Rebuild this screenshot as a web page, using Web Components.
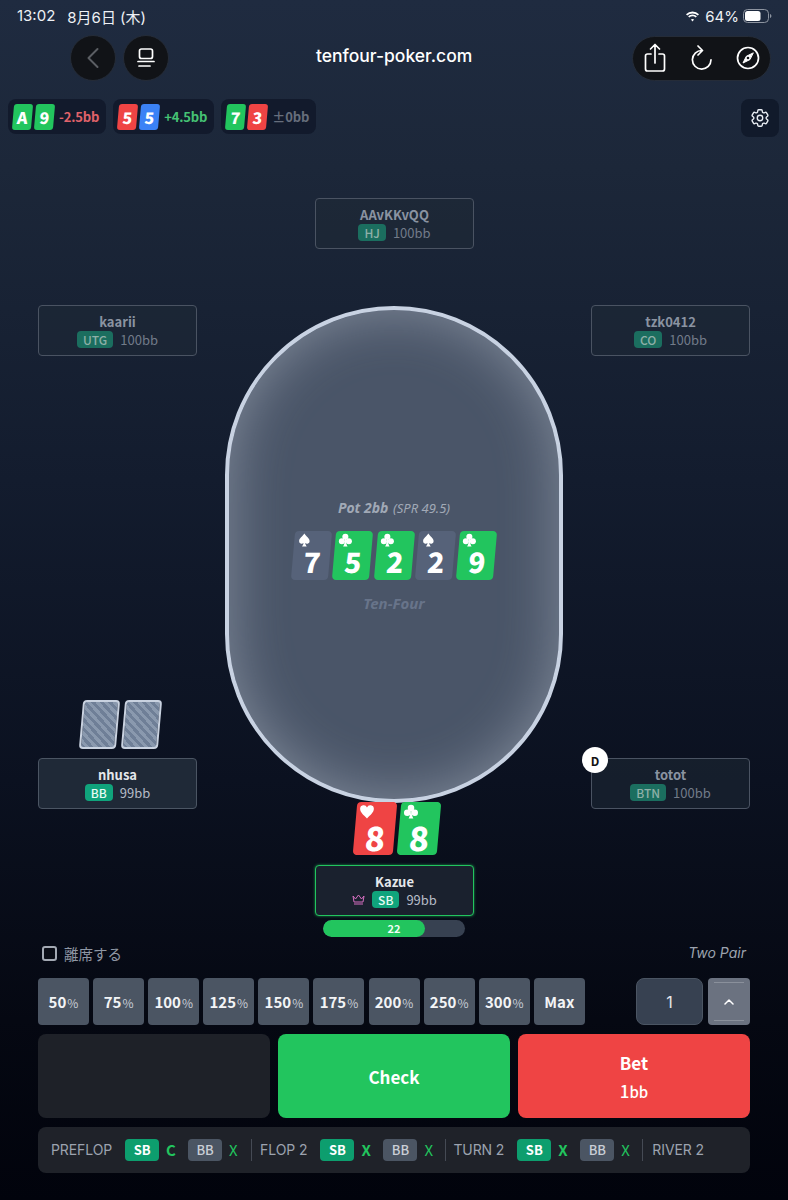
<!DOCTYPE html>
<html>

<head>
    <title>Ten-Four</title>
    <meta charset="utf-8">
    <meta name="viewport" content="width=device-width, initial-scale=1" />
    <style>
        html, body { margin: 0; padding: 0; }
        body {
            width: 788px;
            height: 1200px;
            overflow: hidden;
            background: linear-gradient(180deg, #1f2b40 0%, #1c2739 14%, #131c2e 40%, #0b1120 65%, #050812 85%, #01030c 100%);
            font-family: "Noto Sans CJK JP", "Noto Sans", sans-serif;
            color: #fff;
        }
    </style>
    <script>
        const UI = '"Noto Sans CJK JP", "Noto Sans", sans-serif';

        class Base extends HTMLElement {
            render(css, html) {
                if (this.shadowRoot) return;
                this.attachShadow({ mode: 'open' }).innerHTML = `<style>${css}</style>${html}`;
            }
            attr(name, fallback = '') { return this.hasAttribute(name) ? this.getAttribute(name) : fallback; }
        }

        const SUITS = {
            s: '<path d="M12 1C9 6 3 9 3 14a4.500 4.500 0 0 0 7.500 3.300C10.300 19.500 9.500 21 8 23h8c-1.500-2-2.300-3.500-2.500-5.700A4.500 4.500 0 0 0 21 14C21 9 15 6 12 1z"/>',
            c: '<circle cx="12" cy="6.500" r="5.200"/><circle cx="6" cy="14" r="5.200"/><circle cx="18" cy="14" r="5.200"/><path d="M11 10h2c0 6 .8 10 2.800 13H8.200C10.200 20 11 16 11 10z"/>',
            h: '<path d="M12 23C6 17 1 13 1 7.500a5.700 5.700 0 0 1 11-2 5.700 5.700 0 0 1 11 2C23 13 18 17 12 23z"/>'
        };
        const COLORS = { s: '#566279', c: '#22c55e', h: '#ef4444', d: '#3b82f6' };

        customElements.define('status-bar', class extends Base {
            connectedCallback() {
                this.render(`
                    :host { display: flex; align-items: center; justify-content: space-between; height: 34px; padding: 0 16px 2px 17px; box-sizing: border-box; font: 400 15px Inter, "Noto Sans CJK JP", sans-serif; color: #eef1f5; }
                    .left { display: flex; gap: 12px; }
                    .right { display: flex; align-items: center; gap: 5px; }
                    svg { display: block; }
                `, `
                    <div class="left"><span>13:02</span><span>8月6日 (木)</span></div>
                    <div class="right">
                        <svg width="15" height="11" viewBox="0 0 15 11" fill="#fff"><path d="M7.5 2.4c2 0 3.900.8 5.300 2.200l1.200-1.300A9.300 9.300 0 0 0 7.500.5 9.300 9.300 0 0 0 1 3.300l1.200 1.300a7.500 7.500 0 0 1 5.300-2.200z"/><path d="M7.500 5.300c1.200 0 2.300.5 3.200 1.300l1.200-1.300a6.200 6.200 0 0 0-8.800 0l1.200 1.300c.9-.8 2-1.300 3.200-1.300z"/><path d="M7.500 7.900c-.6 0-1.200.2-1.600.6l1.600 1.900 1.600-1.900c-.4-.4-1-.6-1.600-.6z"/></svg>
                        <span>64%</span>
                        <svg width="29" height="14" viewBox="0 0 29 14" style="margin-left:-1px"><rect x=".5" y=".5" width="25" height="13" rx="4" fill="none" stroke="#8d94a0"/><rect x="2" y="2" width="15.500" height="10" rx="2.500" fill="#fff"/><path d="M27 5v4c.8-.3 1.400-1 1.400-2s-.6-1.700-1.400-2z" fill="#8d94a0"/></svg>
                    </div>
                `);
            }
        });

        customElements.define('browser-bar', class extends Base {
            connectedCallback() {
                this.render(`
                    :host { display: grid; grid-template-columns: 246px auto 1fr; align-items: center; height: 45px; margin-top: 1px; padding: 0 17px 0 70px; }
                    .group { display: flex; gap: 7px; }
                    .round { width: 46px; height: 46px; box-sizing: border-box; border-radius: 50%; background: #111317; display: flex; align-items: center; justify-content: center; border: 1px solid #252c38; }
                    .title { padding-bottom: 5px; font: 500 17.500px Inter, sans-serif; color: #fff; }
                    .pill { justify-self: end; width: 139px; height: 45px; box-sizing: border-box; border-radius: 23px; background: #111317; border: 1px solid #252c38; display: flex; align-items: center; justify-content: space-between; padding: 0 10px 0 11px; }
                    svg { display: block; fill: none; stroke: #fff; stroke-width: 1.700; stroke-linecap: round; stroke-linejoin: round; }
                `, `
                    <div class="group">
                        <div class="round"><svg width="14" height="22" viewBox="0 0 14 22" style="stroke:#5b5e63;stroke-width:2"><path d="M11.500 2 2.500 11l9 9"/></svg></div>
                        <div class="round"><svg width="18" height="20" viewBox="0 0 18 20"><rect x="2.500" y="1" width="13" height="9.500" rx="2"/><path d="M1 13.500h16M2 18h11"/></svg></div>
                    </div>
                    <div class="title">tenfour-poker.com</div>
                    <div class="pill">
                        <svg width="22" height="30" viewBox="0 0 22 30"><path d="M7 11H3.500A2 2 0 0 0 1.500 13v13a2 2 0 0 0 2 2h15a2 2 0 0 0 2-2V13a2 2 0 0 0-2-2H15M11 20V2M6.500 6 11 1.500 15.500 6"/></svg>
                        <svg width="22" height="26" viewBox="0 0 22 26"><path d="M12 5.500a9.300 9.300 0 1 0 9 9.300M8 1l4.500 4.500L8 10"/></svg>
                        <svg width="24" height="24" viewBox="0 0 24 24"><circle cx="12" cy="12" r="10.500"/><path d="M17 7l-6.700 3.300L7 17l6.700-3.300z" fill="#fff" stroke-width="1"/><circle cx="12" cy="12" r="1.300" fill="#111317" stroke="none"/></svg>
                    </div>
                `);
            }
        });

        customElements.define('mini-card', class extends Base {
            connectedCallback() {
                const suit = this.attr('suit', 's');
                this.render(`
                    :host { display: flex; align-items: center; justify-content: center; width: 19px; height: 26px; border-radius: 3px; transform: skewX(-5deg); background: ${COLORS[suit]}; font: 900 16px/20px ${UI}; color: #fff; }
                `, `<slot></slot>`);
            }
        });

        customElements.define('hand-chip', class extends Base {
            connectedCallback() {
                this.render(`
                    :host { display: flex; align-items: center; height: 35px; box-sizing: border-box; padding: 0 7px 0 5px; border-radius: 8px; background: #121a2c; gap: 3px; }
                    .delta { margin-left: 2px; letter-spacing: -.15px; font: 700 13px/20px ${UI}; color: ${this.attr('color', '#fff')}; }
                `, `<slot></slot><span class="delta">${this.attr('delta')}</span>`);
            }
        });

        customElements.define('hand-row', class extends Base {
            connectedCallback() {
                this.render(`
                    :host { display: flex; align-items: flex-start; gap: 7px; height: 38px; margin-top: 19px; padding: 0 9px 0 8px; }
                    .gear { margin-left: auto; width: 38px; height: 38px; border-radius: 8px; background: #111a2b; display: flex; align-items: center; justify-content: center; }
                    svg { display: block; fill: none; stroke: #e9edf3; stroke-width: 1.500; stroke-linejoin: round; }
                `, `<slot></slot><div class="gear"><svg width="22" height="22" viewBox="0 0 24 24"><path d="M9.594 3.940c.09-.542.56-.94 1.110-.94h2.593c.55 0 1.020.398 1.110.94l.213 1.281c.063.374.313.686.645.87.074.04.147.083.22.127.325.196.72.257 1.075.124l1.217-.456a1.125 1.125 0 0 1 1.370.49l1.296 2.247a1.125 1.125 0 0 1-.26 1.431l-1.003.827c-.293.241-.438.613-.43.992a7.723 7.723 0 0 1 0 .255c-.008.378.137.75.43.991l1.004.827c.424.35.534.955.26 1.430l-1.298 2.247a1.125 1.125 0 0 1-1.369.491l-1.217-.456c-.355-.133-.75-.072-1.076.124a6.470 6.470 0 0 1-.22.128c-.331.183-.581.495-.644.869l-.213 1.281c-.09.543-.56.94-1.110.94h-2.594c-.55 0-1.019-.398-1.110-.94l-.213-1.281c-.062-.374-.312-.686-.644-.87a6.520 6.520 0 0 1-.22-.127c-.325-.196-.72-.257-1.076-.124l-1.217.456a1.125 1.125 0 0 1-1.369-.49l-1.297-2.247a1.125 1.125 0 0 1 .26-1.431l1.004-.827c.292-.24.437-.613.43-.991a6.932 6.932 0 0 1 0-.255c.007-.38-.138-.751-.43-.992l-1.004-.827a1.125 1.125 0 0 1-.26-1.430l1.297-2.247a1.125 1.125 0 0 1 1.370-.491l1.216.456c.356.133.751.072 1.076-.124.072-.044.146-.086.22-.128.332-.183.582-.495.644-.869l.214-1.280Z"/><path d="M15 12a3 3 0 1 1-6 0 3 3 0 0 1 6 0Z"/></svg></div>`);
            }
        });

        customElements.define('play-card', class extends Base {
            connectedCallback() {
                const suit = this.attr('suit', 's');
                const big = this.hasAttribute('big');
                const size = big ? 15 : 14;
                this.render(`
                    :host { display: block; position: relative; width: ${big ? 40 : 37}px; height: ${big ? 53 : 49}px; border-radius: 4px; transform: skewX(-5deg); background: ${COLORS[suit]}; color: #fff; }
                    svg { position: absolute; left: 3px; top: 2px; fill: #fff; transform: skewX(5deg); }
                    .rank { position: absolute; left: 2px; right: 0; bottom: ${big ? 1 : 4}px; text-align: center; font: 900 ${big ? 33 : 28}px/${big ? 34 : 30}px ${UI}; }
                `, `<svg width="${size}" height="${size}" viewBox="0 0 24 24">${SUITS[suit]}</svg><span class="rank"><slot></slot></span>`);
            }
        });

        customElements.define('card-back', class extends Base {
            connectedCallback() {
                this.render(`
                    :host { display: block; width: 37px; height: 49px; box-sizing: border-box; border: 2px solid #c9d2e0; border-radius: 4px; transform: skewX(-5deg);
                        background: repeating-linear-gradient(45deg, #6f7f97 0 3px, #8a99ae 3px 6px); }
                `, ``);
            }
        });

        customElements.define('seat-box', class extends Base {
            connectedCallback() {
                const dim = this.hasAttribute('dim');
                const hero = this.hasAttribute('hero');
                this.render(`
                    :host { position: absolute; display: flex; flex-direction: column; align-items: center; justify-content: center; width: 159px; height: 51px; box-sizing: border-box; border: 1px solid ${hero ? '#22c55e' : dim ? '#4a5362' : '#4b5563'}; border-radius: 4px; background: ${dim ? 'rgba(31,41,55,.55)' : '#1f2937'}; ${hero ? 'box-shadow: 0 0 3px rgba(34,197,94,.7); background:#1a212e;' : ''} }
                    .name { font: 600 13px/18px ${UI}; color: ${dim ? '#8a93a1' : '#e5e7eb'}; }
                    .line { display: flex; align-items: center; gap: 7px; font: 400 13px/18px ${UI}; color: ${dim ? '#727b89' : '#b4bbc6'}; }
                    .pos { display: block; box-sizing: border-box; padding: 0 6px; text-align: center; height: 17px; border-radius: 4px; font: 500 12px/17px ${UI}; background: ${dim ? '#1b6e5f' : '#10a47c'}; color: ${dim ? '#8fb0a8' : '#e8fbf4'}; }
                `, `
                    <div class="name">${this.attr('name')}</div>
                    <div class="line"><slot></slot><span class="pos">${this.attr('pos')}</span><span>${this.attr('stack')}</span></div>
                `);
            }
        });

        customElements.define('poker-table', class extends Base {
            connectedCallback() {
                this.render(`
                    :host { position: absolute; left: 225px; top: 169px; width: 338px; height: 497px; box-sizing: border-box; border: 4px solid #c8d2e2; border-radius: 169px; background: #4a5568; box-shadow: inset 0 0 56px rgba(220,228,240,.38); display: flex; flex-direction: column; align-items: center; padding-top: 188px; }
                    .pot { height: 20px; font: italic 700 14px/20px "Noto Sans", sans-serif; color: #a1a9b6; }
                    .pot small { font: italic 400 13px "Noto Sans", sans-serif; margin-left: 1px; }
                    .board { display: flex; gap: 4.300px; margin-top: 13px; }
                    .brand { margin-top: 14px; font: italic 700 15px/18px "Noto Sans", sans-serif; color: #68748a; }
                `, `
                    <div class="pot">Pot 2bb <small>(SPR 49.5)</small></div>
                    <div class="board"><slot></slot></div>
                    <div class="brand">Ten-Four</div>
                `);
            }
        });

        customElements.define('table-stage', class extends Base {
            connectedCallback() {
                this.render(`:host { display: block; position: relative; height: 808px; }`, `<slot></slot>`);
            }
        });

        customElements.define('card-pair', class extends Base {
            connectedCallback() {
                this.render(`:host { position: absolute; display: flex; gap: ${this.attr('gap', '5')}px; }`, `<slot></slot>`);
            }
        });

        customElements.define('dealer-button', class extends Base {
            connectedCallback() {
                this.render(`:host { position: absolute; width: 26px; height: 26px; border-radius: 50%; background: #fff; color: #111; display: flex; align-items: center; justify-content: center; font: 700 12px ${UI}; }`, `<slot></slot>`);
            }
        });

        customElements.define('timer-bar', class extends Base {
            connectedCallback() {
                this.render(`
                    :host { position: absolute; width: 142px; height: 17px; border-radius: 9px; background: #374151; overflow: hidden; }
                    .fill { position: absolute; left: 0; top: 0; bottom: 0; width: 102px; border-radius: 9px; background: #22c55e; }
                    .txt { position: relative; display: block; text-align: center; font: 600 11px/17px ${UI}; color: #f0fdf4; }
                `, `<div class="fill"></div><span class="txt"><slot></slot></span>`);
            }
        });

        customElements.define('sit-row', class extends Base {
            connectedCallback() {
                this.render(`
                    :host { display: flex; align-items: center; justify-content: space-between; height: 20px; box-sizing: border-box; padding: 0 42px 3px; }
                    .l { display: flex; align-items: center; gap: 7px; font: 400 14.500px ${UI}; color: #8f97a4; }
                    .box { width: 11px; height: 11px; border: 2px solid #a3a9b3; border-radius: 3px; background: #0a0d16; }
                    .r { margin-top: -2px; font: italic 400 14px Inter, sans-serif; color: #9ca3af; }
                `, `<div class="l"><span class="box"></span>離席する</div><div class="r">Two Pair</div>`);
            }
        });

        customElements.define('size-btn', class extends Base {
            connectedCallback() {
                this.render(`
                    :host { display: flex; align-items: baseline; justify-content: center; width: 51px; height: 47px; box-sizing: border-box; padding-top: 14px; border-radius: 4px; background: #4b5563; font: 700 15px/20px ${UI}; color: #f3f4f6; }
                    small { font: 400 12px ${UI}; color: #c7ccd4; margin-left: 1px; }
                `, `<slot></slot>${this.hasAttribute('plain') ? '' : '<small>%</small>'}`);
            }
        });

        customElements.define('size-row', class extends Base {
            connectedCallback() {
                this.render(`
                    :host { display: flex; align-items: stretch; gap: 4.100px; height: 47px; margin-top: 13px; padding: 0 38px; }
                    .amount { margin-left: 47px; width: 67px; box-sizing: border-box; border: 1px solid #4b5563; border-radius: 8px; background: #374151; display: flex; align-items: center; justify-content: center; font: 400 16px Inter, sans-serif; color: #e5e7eb; }
                    .step { margin-left: 1px; width: 42px; border-radius: 4px; background: #6b7280; position: relative; display: flex; align-items: center; justify-content: center; }
                    .step::before, .step::after { content: ""; position: absolute; left: 6px; right: 6px; height: 1px; background: #8a909b; }
                    .step::before { top: 4px; }
                    .step::after { bottom: 4px; }
                    svg { display: block; fill: none; stroke: #fff; stroke-width: 1.500; stroke-linecap: round; stroke-linejoin: round; }
                `, `
                    <slot></slot>
                    <div class="amount">1</div>
                    <div class="step"><svg width="10" height="6" viewBox="0 0 10 6"><path d="M1 5l4-4 4 4"/></svg></div>
                `);
            }
        });

        customElements.define('action-btn', class extends Base {
            connectedCallback() {
                this.render(`
                    :host { flex: 1; display: flex; flex-direction: column; align-items: center; justify-content: center; box-sizing: border-box; padding-top: 2px; border-radius: 8px; background: ${this.attr('color', '#1e2128')}; font: 700 17px/28px ${UI}; color: #fff; }
                    .sub { font: 500 17px/28px ${UI}; }
                    .sub small { font-size: 15px; font-weight: 500; }
                `, `<slot></slot>${this.hasAttribute('sub') ? `<span class="sub">${this.attr('sub')}<small>bb</small></span>` : ''}`);
            }
        });

        customElements.define('action-row', class extends Base {
            connectedCallback() {
                this.render(`:host { display: flex; gap: 8px; height: 84px; margin-top: 9px; padding: 0 38px; }`, `<slot></slot>`);
            }
        });

        customElements.define('street-log', class extends Base {
            connectedCallback() {
                this.render(`
                    :host { display: flex; align-items: center; height: 46px; margin: 9px 38px 0; box-sizing: border-box; padding: 0 13px 1px; border-radius: 8px; background: #1f2229; font: 400 14px Inter, sans-serif; letter-spacing: -.1px; color: #9ca3af; white-space: nowrap; }
                `, `<slot></slot>`);
            }
        });

        customElements.define('street-act', class extends Base {
            connectedCallback() {
                const on = this.hasAttribute('on');
                this.render(`
                    :host { display: flex; align-items: center; margin-left: 13px; letter-spacing: 0; }
                    .b { width: 34px; height: 22px; border-radius: 4px; display: flex; align-items: center; justify-content: center; background: ${on ? '#0d9e6e' : '#4b5563'}; color: ${on ? '#fff' : '#c9ced6'}; font: ${on ? 700 : 500} 13px ${UI}; }
                    .a { width: 9px; margin-left: 7px; color: #22c55e; font: ${on ? 700 : 400} 15px ${UI}; }
                `, `<span class="b">${this.attr('pos')}</span><span class="a">${this.attr('act')}</span>`);
            }
        });

        customElements.define('street-sep', class extends Base {
            connectedCallback() {
                this.render(`:host { display: block; width: 1px; height: 22px; margin: 0 8px 0 12px; background: #454a54; }`, ``);
            }
        });
    </script>
</head>

<body>
    <status-bar></status-bar>
    <browser-bar></browser-bar>

    <hand-row>
        <hand-chip delta="-2.5bb" color="#e0626a"><mini-card suit="c">A</mini-card><mini-card suit="c">9</mini-card></hand-chip>
        <hand-chip delta="+4.5bb" color="#45c274"><mini-card suit="h">5</mini-card><mini-card suit="d">5</mini-card></hand-chip>
        <hand-chip delta="±0bb" color="#666e7c"><mini-card suit="c">7</mini-card><mini-card suit="h">3</mini-card></hand-chip>
    </hand-row>

    <table-stage>
        <seat-box dim name="AAvKKvQQ" pos="HJ" stack="100bb" style="left:315px;top:61px"></seat-box>
        <seat-box dim name="kaarii" pos="UTG" stack="100bb" style="left:38px;top:168px"></seat-box>
        <seat-box dim name="tzk0412" pos="CO" stack="100bb" style="left:591px;top:168px"></seat-box>

        <poker-table>
            <play-card suit="s">7</play-card>
            <play-card suit="c">5</play-card>
            <play-card suit="c">2</play-card>
            <play-card suit="s">2</play-card>
            <play-card suit="c">9</play-card>
        </poker-table>

        <card-pair style="left:81px;top:563px"><card-back></card-back><card-back></card-back></card-pair>
        <seat-box name="nhusa" pos="BB" stack="99bb" style="left:38px;top:621px"></seat-box>

        <seat-box dim name="totot" pos="BTN" stack="100bb" style="left:591px;top:621px"></seat-box>
        <dealer-button style="left:582px;top:610px">D</dealer-button>

        <card-pair gap="4" style="left:355px;top:665px"><play-card big suit="h">8</play-card><play-card big suit="c">8</play-card></card-pair>
        <seat-box hero name="Kazue" pos="SB" stack="99bb" style="left:315px;top:728px">
            <svg width="13" height="11" viewBox="0 0 13 11" fill="none" stroke="#d56fc0" stroke-width="1" stroke-linejoin="round"><path d="M1 2l2.500 3L6.500 1l3 4L12 2l-1 6H2zM2 10h9"/></svg>
        </seat-box>
        <timer-bar style="left:323px;top:783px">22</timer-bar>
    </table-stage>

    <sit-row></sit-row>

    <size-row>
        <size-btn>50</size-btn><size-btn>75</size-btn><size-btn>100</size-btn><size-btn>125</size-btn><size-btn>150</size-btn><size-btn>175</size-btn><size-btn>200</size-btn><size-btn>250</size-btn><size-btn>300</size-btn><size-btn plain>Max</size-btn>
    </size-row>

    <action-row>
        <action-btn></action-btn>
        <action-btn color="#22c55e">Check</action-btn>
        <action-btn color="#ef4444" sub="1">Bet</action-btn>
    </action-row>

    <street-log>
        PREFLOP
        <street-act on pos="SB" act="C"></street-act><street-act pos="BB" act="X"></street-act>
        <street-sep style="margin-left:13px"></street-sep>FLOP 2
        <street-act on pos="SB" act="X"></street-act><street-act pos="BB" act="X"></street-act>
        <street-sep style="margin-right:7px"></street-sep>TURN 2
        <street-act on pos="SB" act="X"></street-act><street-act pos="BB" act="X"></street-act>
        <street-sep style="margin-right:9px"></street-sep>RIVER 2
    </street-log>
</body>

</html>
